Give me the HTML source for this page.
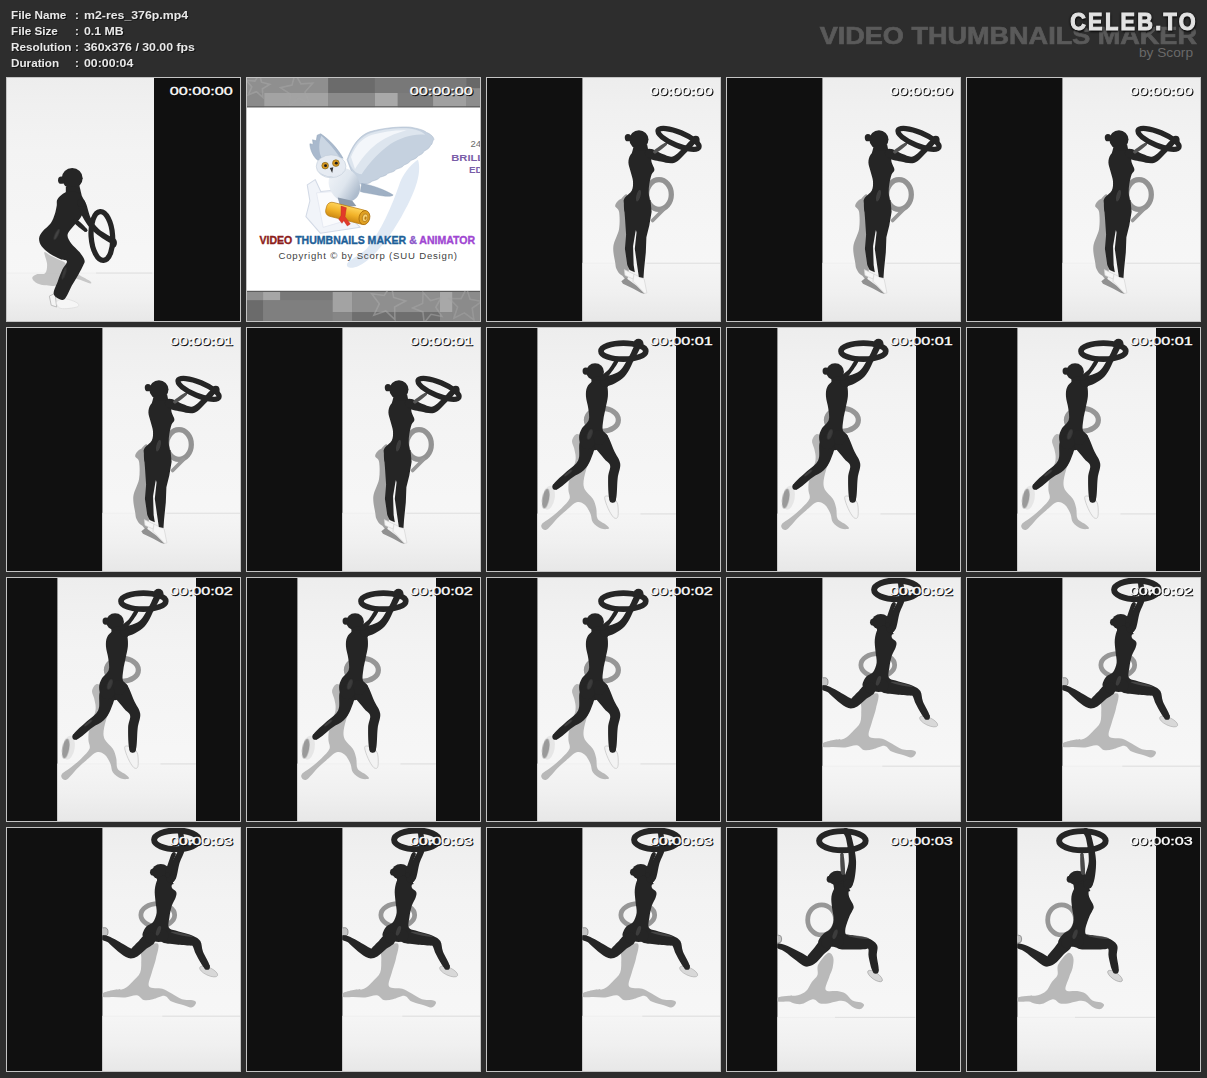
<!DOCTYPE html>
<html><head><meta charset="utf-8"><title>m2-res_376p.mp4</title>
<style>
html,body{margin:0;padding:0;}
body{width:1207px;height:1078px;overflow:hidden;background:#2d2d2d;font-family:"Liberation Sans",sans-serif;position:relative;}
.info{position:absolute;left:11px;top:7px;color:#e9e9e9;font-weight:bold;font-size:11px;line-height:16px;text-shadow:1px 1px 0 #151515;}
.info span{position:absolute;left:0;white-space:nowrap;transform-origin:0 50%;transform:scaleX(1.065);}
.info span.v{transform:scaleX(1.12);}
.vtm{position:absolute;right:10px;top:21px;font-weight:bold;font-size:24.6px;line-height:30px;color:#5a5a5a;white-space:nowrap;transform-origin:100% 50%;transform:scaleX(1.10);-webkit-text-stroke:0.7px #5a5a5a;}
.by{position:absolute;right:14px;top:44px;font-size:13.7px;line-height:18px;color:#696969;white-space:nowrap;}
.celeb{position:absolute;right:9.5px;top:8px;font-weight:bold;font-size:23px;line-height:28px;color:#e2e2e2;white-space:nowrap;letter-spacing:2.5px;transform-origin:100% 50%;transform:scaleX(0.94);-webkit-text-stroke:1.1px #e2e2e2;text-shadow:1px 2px 2px #0c0c0c,0 0 3px #0c0c0c,-1px 0 2px #111;}
.t{position:absolute;width:235px;height:245px;overflow:hidden;}
.t svg{position:absolute;left:0;top:0;display:block;}
</style></head><body>
<svg width="0" height="0" style="position:absolute"><defs>
<linearGradient id="bg" gradientUnits="userSpaceOnUse" x1="0" y1="0" x2="0" y2="245"><stop offset="0" stop-color="#ededed"/><stop offset="0.12" stop-color="#f0f0f0"/><stop offset="0.3" stop-color="#f3f3f3"/><stop offset="0.7" stop-color="#f6f6f6"/><stop offset="1" stop-color="#f7f7f7"/></linearGradient>
<linearGradient id="fl" x1="0" y1="0" x2="0" y2="1"><stop offset="0" stop-color="#f5f5f5"/><stop offset="0.5" stop-color="#f0f0f0"/><stop offset="1" stop-color="#e7e7e7"/></linearGradient>
<filter id="bl" x="-20%" y="-20%" width="140%" height="140%"><feGaussianBlur stdDeviation="0.5"/></filter>
<filter id="bl2" x="-20%" y="-20%" width="140%" height="140%"><feGaussianBlur stdDeviation="1.1"/></filter>
<clipPath id="clipA"><rect x="1.0" y="1" width="147.0" height="243"/></clipPath>
<g id="poseA" transform="scale(0.22822)"><rect x="0" y="859" width="1034" height="219" fill="url(#fl)"/><line x1="0" y1="859" x2="1034" y2="859" stroke="#ececec" stroke-width="3"/><line x1="395" y1="859" x2="640" y2="859" stroke="#d6d6d6" stroke-width="3"/><g filter="url(#bl2)" opacity="0.9"><path d="M168.0,768.0C170.7,761.8 184.5,777.2 196.0,783.0C207.5,788.8 226.0,797.2 237.0,803.0C248.0,808.8 259.8,810.8 262.0,818.0C264.2,825.2 253.7,835.7 250.0,846.0C246.3,856.3 244.0,869.0 240.0,880.0C236.0,891.0 237.7,906.5 226.0,912.0C214.3,917.5 186.0,915.0 170.0,913.0C154.0,911.0 139.2,905.5 130.0,900.0C120.8,894.5 114.2,886.0 115.0,880.0C115.8,874.0 125.7,867.3 135.0,864.0C144.3,860.7 163.5,867.3 171.0,860.0C178.5,852.7 180.5,835.3 180.0,820.0C179.5,804.7 165.3,774.2 168.0,768.0Z" fill="#bebebe" /><path d="M300.0,850.0C303.8,848.2 311.5,861.5 323.0,869.0C334.5,876.5 361.3,889.0 369.0,895.0C376.7,901.0 375.8,905.8 369.0,905.0C362.2,904.2 339.5,894.2 328.0,890.0C316.5,885.8 304.7,886.7 300.0,880.0C295.3,873.3 296.2,851.8 300.0,850.0Z" fill="#c4c4c4" /></g><g ><polygon points="190,960 215,948 222,1008 198,1000" fill="#f4f4f4" stroke="#b8b8b8" stroke-width="4"/><path d="M222.0,985.0C225.3,978.0 245.0,971.2 260.0,972.0C275.0,972.8 303.7,984.0 312.0,990.0C320.3,996.0 322.0,1004.0 310.0,1008.0C298.0,1012.0 254.7,1017.8 240.0,1014.0C225.3,1010.2 218.7,992.0 222.0,985.0Z" fill="#f6f6f6" stroke="#dadada" stroke-width="3"/></g><g ><ellipse cx="290" cy="444" rx="46" ry="45" fill="#252525" /><ellipse cx="242" cy="452" rx="14" ry="16" fill="#252525" /><polygon points="262,480 322,478 332,520 262,525" fill="#252525" /><path d="M227.0,533.0C234.5,522.7 251.8,507.2 267.0,503.0C282.2,498.8 305.7,502.2 318.0,508.0C330.3,513.8 336.7,527.0 341.0,538.0C345.3,549.0 346.2,561.2 344.0,574.0C341.8,586.8 335.3,602.7 328.0,615.0C320.7,627.3 309.7,635.5 300.0,648.0C290.3,660.5 272.5,676.7 270.0,690.0C267.5,703.3 276.2,715.0 285.0,728.0C293.8,741.0 313.2,755.5 323.0,768.0C332.8,780.5 341.5,793.3 344.0,803.0C346.5,812.7 342.3,815.8 338.0,826.0C333.7,836.2 326.3,849.2 318.0,864.0C309.7,878.8 297.3,898.0 288.0,915.0C278.7,932.0 269.7,955.8 262.0,966.0C254.3,976.2 250.8,978.5 242.0,976.0C233.2,973.5 211.5,964.5 209.0,951.0C206.5,937.5 220.7,912.8 227.0,895.0C233.3,877.2 240.3,858.5 247.0,844.0C253.7,829.5 268.7,815.7 267.0,808.0C265.3,800.3 249.7,803.8 237.0,798.0C224.3,792.2 204.5,782.3 191.0,773.0C177.5,763.7 163.7,753.0 156.0,742.0C148.3,731.0 144.2,718.0 145.0,707.0C145.8,696.0 152.5,687.0 161.0,676.0C169.5,665.0 187.2,653.7 196.0,641.0C204.8,628.3 209.7,612.7 214.0,600.0C218.3,587.3 219.8,576.2 222.0,565.0C224.2,553.8 219.5,543.3 227.0,533.0Z" fill="#252525" /><path d="M314.2,558.3C314.4,572.6 333.8,610.7 346.8,631.9C359.8,653.0 372.4,668.5 392.1,685.1C411.8,701.6 450.9,726.6 465.0,731.2C479.2,735.8 486.5,723.5 477.0,712.8C467.5,702.1 425.5,682.7 407.9,666.9C390.2,651.2 381.5,638.3 371.2,618.1C360.8,597.9 355.3,555.7 345.8,545.7C336.3,535.8 314.0,543.9 314.2,558.3Z" fill="#252525" /><circle cx="330" cy="552" r="17" fill="#252525"/><circle cx="471" cy="722" r="11" fill="#252525"/><path d="M297.0,636.7C302.8,645.6 334.5,671.8 344.0,676.6C353.5,681.4 359.8,674.3 354.0,665.4C348.2,656.5 318.5,628.1 309.0,623.3C299.5,618.5 291.2,627.8 297.0,636.7Z" fill="#252525" /><circle cx="303" cy="630" r="9" fill="#252525"/><circle cx="349" cy="671" r="7.5" fill="#252525"/><ellipse cx="420" cy="697" rx="47" ry="107" fill="none" stroke="#252525" stroke-width="23" transform="rotate(-4 420 697)" /><ellipse cx="471" cy="727" rx="15" ry="21" fill="#252525" /></g><g filter="url(#bl2)" opacity="0.65"><ellipse cx="222" cy="690" rx="7" ry="26" fill="#555" transform="rotate(25 222 690)" /><ellipse cx="255" cy="860" rx="6" ry="28" fill="#444" transform="rotate(18 255 860)" /></g></g>
<clipPath id="clipB"><rect x="96.4" y="1" width="137.6" height="243"/></clipPath>
<g id="poseB" transform="scale(0.22822)"><rect x="0" y="816" width="1034" height="262" fill="url(#fl)"/><line x1="0" y1="816" x2="1034" y2="816" stroke="#ececec" stroke-width="3"/><line x1="703" y1="816" x2="1030" y2="816" stroke="#d6d6d6" stroke-width="3"/><g filter="url(#bl2)" opacity="0.95"><ellipse cx="758" cy="515" rx="54" ry="65" fill="none" stroke="#8e8e8e" stroke-width="23" /><polyline points="778,580 730,629" fill="none" stroke="#949494" stroke-width="16" stroke-linecap="round" stroke-linejoin="round" /><path d="M566.0,564.0C567.2,554.8 580.2,539.0 590.0,535.0C599.8,531.0 619.2,485.8 625.0,540.0C630.8,594.2 630.2,805.2 625.0,860.0C619.8,914.8 602.7,871.7 594.0,869.0C585.3,866.3 577.7,853.3 573.0,844.0C568.3,834.7 568.5,830.0 566.0,813.0C563.5,796.0 555.2,766.5 558.0,742.0C560.8,717.5 578.8,691.3 583.0,666.0C587.2,640.7 585.8,607.0 583.0,590.0C580.2,573.0 564.8,573.2 566.0,564.0Z" fill="#9e9e9e" /><polygon points="593,895 612,880 660,915 697,951 680,947 644,927 600,906" fill="#8c8c8c" /></g><g ><polygon points="606,844 649,864 644,885 609,869" fill="#f6f6f6" stroke="#d4d4d4" stroke-width="3"/><polygon points="649,864 693,885 705,946 695,948 644,895" fill="#f6f6f6" stroke="#d4d4d4" stroke-width="3"/></g><g ><ellipse cx="670" cy="274" rx="42" ry="41" fill="#252525" /><ellipse cx="622" cy="266" rx="14" ry="16" fill="#252525" /><polygon points="648,300 706,296 716,345 636,345" fill="#252525" /><path d="M634.0,340.0C640.8,331.2 651.3,323.7 665.0,322.0C678.7,320.3 705.8,321.2 716.0,330.0C726.2,338.8 722.3,362.3 726.0,375.0C729.7,387.7 738.0,397.5 738.0,406.0C738.0,414.5 729.7,415.8 726.0,426.0C722.3,436.2 718.2,453.5 716.0,467.0C713.8,480.5 712.5,493.2 713.0,507.0C713.5,520.8 718.5,535.2 719.0,550.0C719.5,564.8 725.8,585.7 716.0,596.0C706.2,606.3 677.3,612.0 660.0,612.0C642.7,612.0 621.3,606.3 612.0,596.0C602.7,585.7 604.5,561.3 604.0,550.0C603.5,538.7 603.2,536.8 609.0,528.0C614.8,519.2 633.2,508.8 639.0,497.0C644.8,485.2 644.8,470.5 644.0,457.0C643.2,443.5 637.3,429.7 634.0,416.0C630.7,402.3 624.0,387.7 624.0,375.0C624.0,362.3 627.2,348.8 634.0,340.0Z" fill="#252525" /><polygon points="603.7,539 606,580 608.8,615 613.9,691.5 608.8,752.5 619,823.6 629,846 652,856 647,823.6 644.4,742 654.5,681 657,670 659.6,681 652,752.5 662,823.6 669.8,876 690,881 692.6,844 700.3,767.7 702.8,701.7 715.5,650.8 725.7,590 720.6,539" fill="#252525" /><path d="M709.1,352.8C716.2,362.0 746.1,366.6 765.7,370.4C785.2,374.3 807.7,382.4 826.4,375.8C845.2,369.2 863.1,345.3 878.2,330.8C893.3,316.2 913.2,298.1 917.0,288.6C920.8,279.0 910.2,269.3 901.0,273.4C891.8,277.5 875.7,300.8 861.8,313.2C847.9,325.7 832.2,344.1 817.6,348.2C803.0,352.2 790.1,343.1 774.3,337.6C758.6,332.1 733.8,312.7 722.9,315.2C712.1,317.8 701.9,343.6 709.1,352.8Z" fill="#252525" /><circle cx="716" cy="334" r="20" fill="#252525"/><circle cx="909" cy="281" r="11" fill="#252525"/><path d="M744.1,333.7C753.2,329.8 784.0,306.3 790.5,298.9C797.1,291.4 792.6,285.2 783.5,289.1C774.4,293.0 742.5,314.9 735.9,322.3C729.3,329.8 735.0,337.6 744.1,333.7Z" fill="#555" /><circle cx="740" cy="328" r="7" fill="#555"/><circle cx="787" cy="294" r="6" fill="#555"/><ellipse cx="843.6" cy="271" rx="97" ry="29" fill="none" stroke="#252525" stroke-width="23" transform="rotate(22.5 843.6 271)" /><ellipse cx="919" cy="276" rx="17" ry="19" fill="#252525" /></g><g filter="url(#bl2)" opacity="0.65"><ellipse cx="668" cy="520" rx="9" ry="26" fill="#4c4c4c" transform="rotate(15 668 520)" /></g></g>
<clipPath id="clipC"><rect x="51.4" y="1" width="138.6" height="243"/></clipPath>
<g id="poseC" transform="scale(0.22822)"><rect x="0" y="819" width="1034" height="259" fill="url(#fl)"/><line x1="0" y1="819" x2="1034" y2="819" stroke="#ececec" stroke-width="3"/><line x1="677" y1="819" x2="832" y2="819" stroke="#d6d6d6" stroke-width="3"/><g filter="url(#bl2)" opacity="0.92"><ellipse cx="510" cy="407" rx="70" ry="50" fill="none" stroke="#8f8f8f" stroke-width="23" /><path d="M377.0,499.0C378.3,488.2 387.8,473.2 395.0,470.0C402.2,466.8 412.5,471.7 420.0,480.0C427.5,488.3 433.7,504.2 440.0,520.0C446.3,535.8 457.5,559.8 458.0,575.0C458.5,590.2 448.0,594.8 443.0,611.0C438.0,627.2 429.7,655.2 428.0,672.0C426.3,688.8 426.3,698.5 433.0,712.0C439.7,725.5 459.7,739.3 468.0,753.0C476.3,766.7 479.5,779.5 483.0,794.0C486.5,808.5 482.2,828.2 489.0,840.0C495.8,851.8 515.7,857.8 524.0,865.0C532.3,872.2 542.3,880.0 539.0,883.0C535.7,886.0 515.8,887.7 504.0,883.0C492.2,878.3 475.7,865.7 468.0,855.0C460.3,844.3 463.8,831.7 458.0,819.0C452.2,806.3 443.2,787.5 433.0,779.0C422.8,770.5 410.7,763.8 397.0,768.0C383.3,772.2 365.3,792.0 351.0,804.0C336.7,816.0 324.5,826.5 311.0,840.0C297.5,853.5 280.2,877.3 270.0,885.0C259.8,892.7 254.3,889.3 250.0,886.0C245.7,882.7 238.2,873.7 244.0,865.0C249.8,856.3 270.5,845.8 285.0,834.0C299.5,822.2 317.5,807.5 331.0,794.0C344.5,780.5 361.0,766.7 366.0,753.0C371.0,739.3 361.0,727.2 361.0,712.0C361.0,696.8 360.8,683.2 366.0,662.0C371.2,640.8 388.5,606.2 392.0,585.0C395.5,563.8 389.5,549.3 387.0,535.0C384.5,520.7 375.7,509.8 377.0,499.0Z" fill="#b3b3b3" /></g><g ><ellipse cx="274" cy="748" rx="27" ry="53" fill="#e6e6e6" transform="rotate(10 274 748)" /><ellipse cx="262" cy="752" rx="15" ry="44" fill="#9a9a9a" transform="rotate(10 262 752)" filter="url(#bl2)"/><path d="M520.0,745.0C521.7,736.7 535.8,740.8 545.0,745.0C554.2,749.2 569.5,755.8 575.0,770.0C580.5,784.2 580.5,819.2 578.0,830.0C575.5,840.8 567.2,840.8 560.0,835.0C552.8,829.2 541.7,810.0 535.0,795.0C528.3,780.0 518.3,753.3 520.0,745.0Z" fill="#f3f3f3" stroke="#cdcdcd" stroke-width="4"/></g><g ><ellipse cx="478" cy="196" rx="39" ry="37" fill="#252525" /><ellipse cx="437" cy="193" rx="14" ry="16" fill="#252525" /><polygon points="462,222 515,212 535,262 462,275" fill="#252525" /><path d="M443.0,264.0C448.3,252.8 457.2,242.7 470.0,238.0C482.8,233.3 509.7,232.0 520.0,236.0C530.3,240.0 529.7,250.5 532.0,262.0C534.3,273.5 535.3,289.3 534.0,305.0C532.7,320.7 527.3,339.0 524.0,356.0C520.7,373.0 516.0,391.0 514.0,407.0C512.0,423.0 508.5,439.8 512.0,452.0C515.5,464.2 533.7,468.7 535.0,480.0C536.3,491.3 530.8,510.0 520.0,520.0C509.2,530.0 486.7,540.0 470.0,540.0C453.3,540.0 430.3,529.5 420.0,520.0C409.7,510.5 408.0,495.5 408.0,483.0C408.0,470.5 413.0,457.7 420.0,445.0C427.0,432.3 445.3,421.8 450.0,407.0C454.7,392.2 450.0,373.0 448.0,356.0C446.0,339.0 438.8,320.3 438.0,305.0C437.2,289.7 437.7,275.2 443.0,264.0Z" fill="#252525" /><path d="M465.6,500.8C464.4,518.7 502.0,556.8 515.0,574.5C528.1,592.1 540.5,592.4 543.8,606.7C547.1,621.0 535.5,635.6 535.1,660.5C534.6,685.4 535.3,739.9 541.0,755.9C546.7,771.8 563.0,771.5 569.0,756.1C575.0,740.8 573.7,689.6 576.9,663.5C580.1,637.4 590.5,619.0 588.2,599.3C585.9,579.6 573.9,567.5 563.0,545.5C552.0,523.5 538.6,474.6 522.4,467.2C506.2,459.7 466.8,482.9 465.6,500.8Z" fill="#252525" /><circle cx="494" cy="484" r="33" fill="#252525"/><circle cx="555" cy="756" r="14" fill="#252525"/><path d="M414.4,499.8C403.2,509.3 411.3,551.2 408.2,567.3C405.0,583.5 404.6,585.8 395.6,596.6C386.7,607.3 371.4,616.5 354.6,632.0C337.9,647.6 302.1,676.8 295.1,689.8C288.2,702.8 299.2,715.2 312.9,710.2C326.6,705.2 358.1,673.7 377.4,660.0C396.6,646.2 415.0,640.3 428.4,627.4C441.8,614.6 450.0,602.2 457.8,582.7C465.7,563.1 482.8,524.1 475.6,510.2C468.3,496.4 425.7,490.2 414.4,499.8Z" fill="#252525" /><circle cx="445" cy="505" r="31" fill="#252525"/><circle cx="304" cy="700" r="13.5" fill="#252525"/><path d="M528.7,260.0C544.5,259.1 585.7,238.4 606.1,218.2C626.6,197.9 639.6,160.5 651.3,138.4C663.1,116.2 676.1,96.0 676.7,85.4C677.4,74.7 663.3,67.9 655.3,74.6C647.3,81.3 640.6,105.8 628.7,125.6C616.8,145.5 603.4,177.4 583.9,193.8C564.3,210.2 520.5,212.9 511.3,224.0C502.1,235.0 512.9,261.0 528.7,260.0Z" fill="#252525" /><circle cx="520" cy="242" r="20" fill="#252525"/><circle cx="666" cy="80" r="12" fill="#252525"/><path d="M520.0,232.5C527.9,228.9 541.9,208.4 551.6,195.3C561.3,182.3 575.9,162.4 578.2,154.2C580.6,145.9 572.4,140.7 565.8,145.8C559.1,150.9 548.7,172.7 538.4,184.7C528.1,196.6 507.1,209.5 504.0,217.5C500.9,225.4 512.1,236.2 520.0,232.5Z" fill="#252525" /><circle cx="512" cy="225" r="11" fill="#252525"/><circle cx="572" cy="150" r="7.5" fill="#252525"/><ellipse cx="602" cy="106" rx="98" ry="35" fill="none" stroke="#252525" stroke-width="25" /><ellipse cx="668" cy="72" rx="22" ry="20" fill="#252525" /></g><g filter="url(#bl2)" opacity="0.65"><ellipse cx="455" cy="470" rx="10" ry="24" fill="#4a4a4a" transform="rotate(20 455 470)" /><ellipse cx="360" cy="640" rx="22" ry="5" fill="#505050" transform="rotate(-38 360 640)" /></g></g>
<clipPath id="clipD"><rect x="96.4" y="1" width="137.6" height="243"/></clipPath>
<g id="poseD" transform="scale(0.22822)"><rect x="0" y="829" width="1034" height="249" fill="url(#fl)"/><line x1="0" y1="829" x2="1034" y2="829" stroke="#ececec" stroke-width="3"/><line x1="685" y1="829" x2="1030" y2="829" stroke="#d6d6d6" stroke-width="3"/><g filter="url(#bl2)" opacity="0.95"><ellipse cx="665" cy="386" rx="74" ry="50" fill="none" stroke="#929292" stroke-width="21" /><path d="M596.0,531.0C608.0,520.0 654.8,503.3 665.0,511.0C675.2,518.7 661.3,555.8 657.0,577.0C652.7,598.2 644.0,617.7 639.0,638.0C634.0,658.3 619.3,687.2 627.0,699.0C634.7,710.8 668.5,703.8 685.0,709.0C701.5,714.2 711.7,722.3 726.0,730.0C740.3,737.7 755.0,750.0 771.0,755.0C787.0,760.0 811.8,757.0 822.0,760.0C832.2,763.0 833.7,767.8 832.0,773.0C830.3,778.2 821.3,789.8 812.0,791.0C802.7,792.2 790.3,784.3 776.0,780.0C761.7,775.7 739.5,771.7 726.0,765.0C712.5,758.3 708.7,741.7 695.0,740.0C681.3,738.3 659.2,752.0 644.0,755.0C628.8,758.0 615.8,761.0 604.0,758.0C592.2,755.0 586.7,738.8 573.0,737.0C559.3,735.2 539.0,745.7 522.0,747.0C505.0,748.3 487.0,745.3 471.0,745.0C455.0,744.7 433.5,748.0 426.0,745.0C418.5,742.0 418.5,732.2 426.0,727.0C433.5,721.8 455.8,717.0 471.0,714.0C486.2,711.0 503.3,714.8 517.0,709.0C530.7,703.2 541.2,690.8 553.0,679.0C564.8,667.2 581.3,655.0 588.0,638.0C594.7,621.0 591.7,594.8 593.0,577.0C594.3,559.2 584.0,542.0 596.0,531.0Z" fill="#b6b6b6" /></g><g ><ellipse cx="888" cy="633" rx="43" ry="17" fill="#d8d8d8" transform="rotate(25 888 633)" stroke="#b4b4b4" stroke-width="3"/><ellipse cx="431" cy="460" rx="16" ry="19" fill="#c4c4c4" stroke="#8f8f8f" stroke-width="4"/></g><g ><ellipse cx="678" cy="196" rx="39" ry="34" fill="#252525" /><ellipse cx="645" cy="198" rx="14" ry="15" fill="#252525" /><polygon points="660,220 712,205 735,250 668,268" fill="#252525" /><path d="M665.0,229.0C672.2,218.7 684.0,212.0 695.0,212.0C706.0,212.0 725.8,220.3 731.0,229.0C736.2,237.7 723.5,254.7 726.0,264.0C728.5,273.3 743.2,277.3 746.0,285.0C748.8,292.7 746.3,299.8 743.0,310.0C739.7,320.2 730.5,331.7 726.0,346.0C721.5,360.3 718.3,380.8 716.0,396.0C713.7,411.2 709.7,426.0 712.0,437.0C714.3,448.0 733.7,451.5 730.0,462.0C726.3,472.5 705.0,493.7 690.0,500.0C675.0,506.3 655.2,503.7 640.0,500.0C624.8,496.3 603.3,488.5 599.0,478.0C594.7,467.5 606.5,447.2 614.0,437.0C621.5,426.8 636.3,427.2 644.0,417.0C651.7,406.8 658.2,391.3 660.0,376.0C661.8,360.7 656.3,342.0 655.0,325.0C653.7,308.0 650.3,290.0 652.0,274.0C653.7,258.0 657.8,239.3 665.0,229.0Z" fill="#252525" /><path d="M680.6,501.6C690.0,512.7 725.0,511.5 745.8,514.5C766.7,517.5 793.5,518.3 805.6,519.6C817.7,520.8 813.8,515.6 818.4,522.1C822.9,528.6 824.4,542.6 833.0,558.8C841.6,574.9 860.2,610.9 870.0,618.9C879.8,627.0 893.2,619.3 892.0,607.1C890.8,594.8 869.8,563.1 863.0,545.2C856.3,527.4 859.1,511.4 851.6,499.9C844.2,488.4 834.3,483.5 818.4,476.4C802.5,469.4 777.7,462.1 756.2,457.5C734.7,452.8 702.0,441.0 689.4,448.4C676.8,455.7 671.2,490.6 680.6,501.6Z" fill="#252525" /><circle cx="685" cy="475" r="27" fill="#252525"/><circle cx="881" cy="613" r="12.5" fill="#252525"/><path d="M617.7,467.0C606.5,465.9 594.3,487.4 583.1,498.0C571.9,508.7 556.2,524.9 550.6,530.8C545.1,536.7 556.0,536.6 549.7,533.6C543.4,530.5 528.4,521.0 513.1,512.3C497.7,503.7 471.8,488.0 457.5,481.7C443.2,475.4 433.3,472.6 427.2,474.5C421.1,476.5 417.9,488.5 420.8,493.5C423.7,498.4 432.8,495.6 444.5,504.3C456.2,513.0 475.6,534.0 490.9,545.7C506.2,557.4 522.2,570.8 536.3,574.4C550.4,578.0 562.2,574.0 575.4,567.2C588.5,560.5 602.4,544.3 614.9,534.0C627.4,523.6 649.8,516.1 650.3,505.0C650.7,493.8 628.9,468.2 617.7,467.0Z" fill="#252525" /><circle cx="634" cy="486" r="25" fill="#252525"/><circle cx="424" cy="484" r="10" fill="#252525"/><path d="M741.0,231.2C750.6,221.0 753.4,180.3 760.5,157.4C767.7,134.4 781.6,117.1 783.9,93.7C786.1,70.3 778.9,29.5 774.0,17.1C769.0,4.6 756.7,6.7 754.0,18.9C751.4,31.1 761.9,69.0 758.1,90.3C754.4,111.6 740.6,125.2 731.5,146.6C722.3,168.1 701.4,204.7 703.0,218.8C704.6,232.9 731.4,241.5 741.0,231.2Z" fill="#252525" /><circle cx="722" cy="225" r="20" fill="#252525"/><circle cx="764" cy="18" r="10" fill="#252525"/><path d="M718.6,212.8C724.8,202.4 730.5,160.1 734.6,144.6C738.8,129.1 744.4,125.1 743.4,120.0C742.4,114.9 732.9,110.8 728.6,114.0C724.2,117.3 722.6,123.9 717.4,139.4C712.2,154.9 697.2,195.0 697.4,207.2C697.6,219.4 712.4,223.2 718.6,212.8Z" fill="#252525" /><circle cx="708" cy="210" r="11" fill="#252525"/><circle cx="736" cy="117" r="8" fill="#252525"/><ellipse cx="747" cy="56" rx="98" ry="41" fill="none" stroke="#252525" stroke-width="26" /></g><g filter="url(#bl2)" opacity="0.65"><ellipse cx="770" cy="470" rx="50" ry="5" fill="#555" transform="rotate(12 770 470)" /><ellipse cx="668" cy="455" rx="9" ry="22" fill="#484848" transform="rotate(20 668 455)" /></g></g>
<clipPath id="clipE"><rect x="51.4" y="1" width="138.6" height="243"/></clipPath>
<g id="poseE" transform="scale(0.22822)"><rect x="0" y="834" width="1034" height="244" fill="url(#fl)"/><line x1="0" y1="834" x2="1034" y2="834" stroke="#ececec" stroke-width="3"/><line x1="478" y1="834" x2="828" y2="834" stroke="#d6d6d6" stroke-width="3"/><g filter="url(#bl2)" opacity="0.95"><ellipse cx="419" cy="407" rx="61" ry="66" fill="none" stroke="#929292" stroke-width="21" /><path d="M404.0,603.0C411.7,587.0 436.0,557.2 447.0,552.0C458.0,546.8 466.7,561.0 470.0,572.0C473.3,583.0 470.0,603.7 467.0,618.0C464.0,632.3 457.0,642.0 452.0,658.0C447.0,674.0 431.0,703.8 437.0,714.0C443.0,724.2 473.7,716.3 488.0,719.0C502.3,721.7 512.0,723.2 523.0,730.0C534.0,736.8 543.0,753.7 554.0,760.0C565.0,766.3 580.5,764.7 589.0,768.0C597.5,771.3 605.0,775.0 605.0,780.0C605.0,785.0 596.7,796.2 589.0,798.0C581.3,799.8 570.0,796.5 559.0,791.0C548.0,785.5 534.8,769.7 523.0,765.0C511.2,760.3 500.7,761.7 488.0,763.0C475.3,764.3 459.7,771.3 447.0,773.0C434.3,774.7 423.0,776.0 412.0,773.0C401.0,770.0 393.8,754.7 381.0,755.0C368.2,755.3 348.5,772.0 335.0,775.0C321.5,778.0 310.2,774.7 300.0,773.0C289.8,771.3 286.0,766.3 274.0,765.0C262.0,763.7 235.7,768.0 228.0,765.0C220.3,762.0 222.0,751.2 228.0,747.0C234.0,742.8 249.5,741.7 264.0,740.0C278.5,738.3 300.5,740.5 315.0,737.0C329.5,733.5 340.8,728.7 351.0,719.0C361.2,709.3 367.7,690.8 376.0,679.0C384.3,667.2 396.3,660.7 401.0,648.0C405.7,635.3 396.3,619.0 404.0,603.0Z" fill="#b6b6b6" /></g><g ><ellipse cx="653" cy="653" rx="38" ry="15" fill="#d6d6d6" transform="rotate(35 653 653)" stroke="#a8a8a8" stroke-width="3"/><ellipse cx="231" cy="491" rx="13" ry="17" fill="#c8c8c8" stroke="#8f8f8f" stroke-width="4"/></g><g ><ellipse cx="488" cy="224" rx="40" ry="32" fill="#252525" /><ellipse cx="455" cy="229" rx="14" ry="15" fill="#252525" /><polygon points="470,248 522,232 545,280 478,300" fill="#252525" /><path d="M478.0,264.0C485.2,254.0 495.7,245.0 505.0,245.0C514.3,245.0 528.3,254.0 534.0,264.0C539.7,274.0 534.8,291.3 539.0,305.0C543.2,318.7 556.5,335.8 559.0,346.0C561.5,356.2 557.3,357.7 554.0,366.0C550.7,374.3 544.2,382.5 539.0,396.0C533.8,409.5 524.8,434.2 523.0,447.0C521.2,459.8 521.8,467.8 528.0,473.0C534.2,478.2 558.0,470.2 560.0,478.0C562.0,485.8 555.0,512.2 540.0,520.0C525.0,527.8 492.3,527.0 470.0,525.0C447.7,523.0 413.2,517.5 406.0,508.0C398.8,498.5 418.5,478.2 427.0,468.0C435.5,457.8 449.5,457.2 457.0,447.0C464.5,436.8 470.7,422.2 472.0,407.0C473.3,391.8 466.7,373.0 465.0,356.0C463.3,339.0 459.8,320.3 462.0,305.0C464.2,289.7 470.8,274.0 478.0,264.0Z" fill="#252525" /><path d="M485.9,528.9C496.1,539.6 531.0,535.8 551.6,536.9C572.2,538.0 597.4,535.6 609.5,535.4C621.6,535.1 621.6,529.8 624.2,535.4C626.8,541.0 622.0,553.0 625.1,569.2C628.3,585.4 636.0,622.9 643.3,632.6C650.5,642.3 665.8,638.7 668.7,627.4C671.7,616.1 662.0,583.2 660.9,564.8C659.7,546.3 668.5,529.6 661.8,516.6C655.1,503.6 638.0,493.5 620.5,486.6C602.9,479.7 578.2,477.4 556.4,475.1C534.7,472.8 501.9,464.1 490.1,473.1C478.4,482.1 475.6,518.3 485.9,528.9Z" fill="#252525" /><circle cx="488" cy="501" r="28" fill="#252525"/><circle cx="656" cy="630" r="13" fill="#252525"/><path d="M423.6,489.1C411.9,489.5 401.4,512.6 390.5,525.2C379.6,537.8 363.3,557.3 358.0,564.5C352.7,571.8 363.8,571.2 358.7,568.7C353.6,566.3 342.4,557.9 327.7,550.1C312.9,542.2 286.7,528.2 270.5,521.6C254.3,515.0 238.4,509.4 230.5,510.6C222.7,511.9 219.0,523.4 223.5,529.4C228.0,535.3 243.7,537.3 257.5,546.4C271.3,555.5 291.4,573.1 306.3,583.9C321.3,594.7 333.7,608.7 347.3,611.3C360.9,613.8 374.6,608.2 388.0,599.5C401.3,590.7 415.4,571.6 427.5,558.8C439.6,546.0 461.1,534.5 460.4,522.9C459.8,511.3 435.2,488.7 423.6,489.1Z" fill="#252525" /><circle cx="442" cy="506" r="25" fill="#252525"/><circle cx="227" cy="520" r="10" fill="#252525"/><path d="M554.6,254.2C564.0,238.6 570.5,186.7 570.0,152.4C569.5,118.1 557.5,71.7 551.7,48.2C545.9,24.7 541.5,15.9 535.0,11.3C528.6,6.7 514.4,13.6 513.0,20.7C511.5,27.8 522.1,32.0 526.3,53.8C530.5,75.6 540.2,119.6 538.0,151.6C535.9,183.6 510.7,228.7 513.4,245.8C516.2,262.9 545.1,269.8 554.6,254.2Z" fill="#252525" /><circle cx="534" cy="250" r="21" fill="#252525"/><circle cx="524" cy="16" r="12" fill="#252525"/><path d="M521.5,199.5C523.2,186.3 518.4,134.4 515.0,121.6C511.6,108.7 502.8,109.3 501.0,122.4C499.3,135.6 501.1,187.7 504.5,200.5C507.9,213.4 519.7,212.6 521.5,199.5Z" fill="#4a4a4a" /><circle cx="513" cy="200" r="8.5" fill="#4a4a4a"/><circle cx="508" cy="122" r="7" fill="#4a4a4a"/><ellipse cx="510" cy="60" rx="102" ry="42" fill="none" stroke="#252525" stroke-width="26" /></g><g filter="url(#bl2)" opacity="0.65"><ellipse cx="580" cy="482" rx="48" ry="5" fill="#555" transform="rotate(8 580 482)" /><ellipse cx="478" cy="470" rx="9" ry="22" fill="#484848" transform="rotate(20 478 470)" /></g></g>
<linearGradient id="gold" x1="0" y1="0" x2="0" y2="1"><stop offset="0" stop-color="#ffd45a"/><stop offset="0.5" stop-color="#f2b32a"/><stop offset="1" stop-color="#cf8a12"/></linearGradient><linearGradient id="wing" x1="0" y1="0" x2="0.3" y2="1"><stop offset="0" stop-color="#f4f7fb"/><stop offset="0.55" stop-color="#dbe4ee"/><stop offset="1" stop-color="#b7c4d4"/></linearGradient><linearGradient id="obody" x1="0" y1="0" x2="0.4" y2="1"><stop offset="0" stop-color="#f2f5f9"/><stop offset="0.6" stop-color="#dfe6ee"/><stop offset="1" stop-color="#aebccd"/></linearGradient>
</defs></svg>

<div class="info"><span style="top:0">File Name</span><span style="top:0;left:64px">:</span><span style="top:0;left:73px" class="v">m2-res_376p.mp4</span>
<span style="top:16px">File Size</span><span style="top:16px;left:64px">:</span><span style="top:16px;left:73px" class="v">0.1 MB</span>
<span style="top:32px">Resolution</span><span style="top:32px;left:64px">:</span><span style="top:32px;left:73px" class="v">360x376 / 30.00 fps</span>
<span style="top:48px">Duration</span><span style="top:48px;left:64px">:</span><span style="top:48px;left:73px" class="v">00:00:04</span></div>
<div class="vtm">VIDEO THUMBNAILS MAKER</div>
<div class="by">by Scorp</div>
<div class="celeb">CELEB.TO</div>
<div class="t" style="left:6px;top:77px"><svg width="235" height="245" viewBox="0 0 235 245"><rect x="0" y="0" width="235" height="245" fill="#101010"/><rect x="1.0" y="0" width="147.0" height="245" fill="url(#bg)"/><g clip-path="url(#clipA)"><use href="#poseA"/></g><g transform="translate(226.7,18.1) scale(1.385,1)"><text x="0.72" y="1" text-anchor="end" font-family="Liberation Sans, sans-serif" font-size="11.7" fill="#080808" stroke="#080808" stroke-width="0.45">00:00:00</text><text x="0" y="0" text-anchor="end" font-family="Liberation Sans, sans-serif" font-size="11.7" fill="#fdfdfd" stroke="#fdfdfd" stroke-width="0.32">00:00:00</text></g><rect x="0.5" y="0.5" width="234" height="244" fill="none" stroke="#c4c4c4" stroke-width="1"/></svg></div>
<div class="t" style="left:246px;top:77px"><svg width="235" height="245" viewBox="0 0 235 245"><rect width="235" height="245" fill="#ffffff"/><g transform="scale(0.22822)"><rect x="0" y="0" width="1034" height="134" fill="#868686"/><rect x="0" y="0" width="360" height="70" fill="#8f8f8f"/><rect x="0" y="70" width="80" height="64" fill="#8a8a8a"/><rect x="80" y="70" width="280" height="64" fill="#a3a3a3"/><rect x="360" y="0" width="205" height="70" fill="#6b6b6b"/><rect x="360" y="70" width="205" height="64" fill="#8b8b8b"/><rect x="565" y="70" width="100" height="64" fill="#a9a9a9"/><rect x="565" y="0" width="400" height="70" fill="#787878"/><rect x="665" y="70" width="155" height="64" fill="#7d7d7d"/><rect x="820" y="70" width="145" height="64" fill="#a0a0a0"/><rect x="965" y="0" width="69" height="50" fill="#686868"/><rect x="965" y="50" width="69" height="84" fill="#8d8d8d"/><polygon points="59.6,-14.2 67.8,22.8 104.5,32.3 71.9,51.6 74.1,89.4 45.7,64.4 10.4,78.2 25.5,43.4 1.4,14.2 39.2,17.8" fill="none" stroke="#a8a8a8" stroke-width="7" opacity="0.55"/><polygon points="214.6,-14.3 240.8,30.2 292.4,27.1 258.2,65.9 277.1,114.0 229.7,93.4 189.8,126.2 194.7,74.8 151.1,47.0 201.6,35.7" fill="none" stroke="#a6a6a6" stroke-width="7" opacity="0.55"/><rect x="0" y="128" width="1034" height="6" fill="#5c5c5c"/><rect x="0" y="936" width="1034" height="142" fill="#838383"/><rect x="0" y="936" width="1034" height="6" fill="#5c5c5c"/><rect x="0" y="942" width="75" height="36" fill="#8e8e8e"/><rect x="75" y="942" width="75" height="36" fill="#a6a6a6"/><rect x="0" y="978" width="75" height="100" fill="#6b6b6b"/><rect x="75" y="978" width="305" height="100" fill="#7f7f7f"/><rect x="150" y="942" width="230" height="36" fill="#797979"/><rect x="380" y="942" width="85" height="88" fill="#a3a3a3"/><rect x="380" y="1030" width="85" height="48" fill="#858585"/><rect x="465" y="942" width="385" height="88" fill="#8f8f8f"/><rect x="465" y="1030" width="385" height="48" fill="#6f6f6f"/><rect x="850" y="942" width="55" height="88" fill="#a8a8a8"/><rect x="850" y="1030" width="55" height="48" fill="#8a8a8a"/><rect x="905" y="942" width="129" height="136" fill="#8b8b8b"/><polygon points="636.6,911.7 646.8,965.9 699.6,981.6 651.2,1008.0 652.5,1063.1 612.5,1025.2 560.5,1043.5 584.2,993.8 550.7,950.0 605.4,957.1" fill="none" stroke="#a9a9a9" stroke-width="7" opacity="0.55"/><polygon points="776.1,944.2 808.7,979.7 855.2,966.9 831.5,1008.9 858.0,1049.1 810.8,1039.6 780.7,1077.3 775.2,1029.4 730.0,1012.4 773.9,992.4" fill="none" stroke="#a5a5a5" stroke-width="7" opacity="0.55"/><polygon points="966.5,925.3 982.1,974.5 1033.1,983.1 991.1,1013.2 998.6,1064.3 957.1,1033.6 910.8,1056.6 927.1,1007.6 891.0,970.7 942.6,971.1" fill="none" stroke="#a2a2a2" stroke-width="7" opacity="0.55"/><rect x="0" y="134" width="1034" height="802" fill="#ffffff"/><g transform="translate(192.8,100.8) scale(0.5811)"><path d="M965,450 C1000,560 930,720 840,880 C760,1020 640,1190 520,1250 C470,1275 420,1270 430,1235 C450,1200 520,1180 580,1120 C680,1000 770,800 830,620 C860,540 930,470 965,450 Z" fill="#e0e9f4"/><path d="M130,640 L190,600 L232,690 L330,680 L470,900 L530,960 L230,1005 L120,880 L150,760 Z" fill="#f1f4f9" stroke="#d3dae6" stroke-width="8" stroke-linejoin="round"/><path d="M200,700 L330,690 L455,900 L250,960 Z" fill="#fafbfd" stroke="#dfe4ee" stroke-width="5" stroke-linejoin="round"/><path d="M210,455 C175,430 150,370 150,330 L175,335 L170,300 L198,308 L205,265 L232,255 C300,300 370,380 400,440 C340,420 260,430 210,455 Z" fill="#a9b9cd" stroke="#93a5bb" stroke-width="4" stroke-linejoin="round"/><path d="M236,270 C290,320 350,390 380,440 C330,425 270,430 240,440 C215,400 215,320 236,270 Z" fill="#cbd6e3"/><path d="M430,450 C470,340 520,270 600,240 C720,205 850,200 910,205 C960,215 1010,225 1030,245 C1060,255 1085,280 1085,298 C1070,310 1080,330 1058,345 C1050,365 1035,372 1010,386 C1005,405 985,412 968,420 C955,440 935,447 910,456 C900,475 880,482 860,490 C850,508 825,514 800,522 C790,540 765,545 740,552 C730,568 705,574 680,582 C668,598 645,604 620,612 L600,625 C560,640 520,640 490,610 Z" fill="#c5d1df" stroke="#a9b9cb" stroke-width="4" stroke-linejoin="round"/><path d="M440,450 C480,340 530,275 610,248 C720,215 840,210 900,215 C960,225 1000,240 1020,262 C940,250 840,280 760,330 C680,385 600,470 540,560 C500,560 460,520 440,450 Z" fill="#dde5ee"/><path d="M460,430 C500,330 550,285 620,262 C700,238 800,225 880,228 C790,250 700,290 630,350 C570,400 520,470 490,520 Z" fill="#f3f6fa"/><path d="M540,630 C620,640 720,680 778,716 C765,735 700,725 640,712 C600,705 560,700 530,690 Z" fill="#9fb0c4" stroke="#8a9db4" stroke-width="3"/><ellipse cx="410" cy="640" rx="112" ry="135" fill="url(#obody)" transform="rotate(-32 410 640)"/><path d="M360,735 L470,760 L500,800 L380,810 Z" fill="#8c9aab"/><ellipse cx="310" cy="500" rx="112" ry="86" fill="#e6ebf2" stroke="#bcc8d6" stroke-width="4"/><path d="M205,520 C240,590 380,600 418,515 C400,560 340,580 300,578 C260,576 225,560 205,520 Z" fill="#b9c6d6"/><circle cx="265" cy="495" r="25" fill="#dc9a1e" stroke="#7d6428" stroke-width="5"/><circle cx="268" cy="495" r="11" fill="#1c1c1c"/><circle cx="346" cy="476" r="25" fill="#dc9a1e" stroke="#7d6428" stroke-width="5"/><circle cx="349" cy="476" r="11" fill="#1c1c1c"/><path d="M300,512 L326,508 L318,550 Z" fill="#333"/><g transform="rotate(14 430 855)"><rect x="268" y="800" width="320" height="108" rx="40" fill="url(#gold)" stroke="#b67a10" stroke-width="5"/><ellipse cx="565" cy="854" rx="40" ry="54" fill="#dfa022" stroke="#a66b0c" stroke-width="6"/><ellipse cx="570" cy="854" rx="21" ry="30" fill="#f7d273" stroke="#a66b0c" stroke-width="5"/><ellipse cx="574" cy="856" rx="8" ry="12" fill="#b87a10"/></g><path d="M385,800 L425,812 L415,880 L455,935 L432,950 L405,910 L392,930 L368,900 L385,870 Z" fill="#e23a2a" stroke="#b82a1c" stroke-width="3"/></g></g><g transform="translate(13.5,166.6) scale(1.0,1)"><text font-family="Liberation Sans, sans-serif" font-weight="bold" font-size="10.4" textLength="215.5" lengthAdjust="spacingAndGlyphs" stroke-width="0.35"><tspan fill="#8c1b1b" stroke="#8c1b1b">VIDEO</tspan><tspan fill="#1d5f98" stroke="#1d5f98"> THUMBNAILS MAKER</tspan><tspan fill="#8a57c9" stroke="#8a57c9"> &amp;</tspan><tspan fill="#a046d2" stroke="#a046d2"> ANIMATOR</tspan></text></g><text x="32.5" y="182.2" font-family="Liberation Sans, sans-serif" font-size="9.6" fill="#3f3f3f" textLength="178.5" lengthAdjust="spacing">Copyright © by Scorp (SUU Design)</text><text x="224.5" y="70" font-family="Liberation Sans, sans-serif" font-size="9.5" fill="#6a6a6a">24</text><text x="205.3" y="84.3" font-family="Liberation Sans, sans-serif" font-size="9.8" font-weight="bold" fill="#7a5ea8" textLength="36" lengthAdjust="spacingAndGlyphs">BRILLI</text><text x="223" y="96.2" font-family="Liberation Sans, sans-serif" font-size="9.8" font-weight="bold" fill="#7a5ea8">ED</text><g transform="translate(226.7,18.1) scale(1.385,1)"><text x="0.72" y="1" text-anchor="end" font-family="Liberation Sans, sans-serif" font-size="11.7" fill="#080808" stroke="#080808" stroke-width="0.45">00:00:00</text><text x="0" y="0" text-anchor="end" font-family="Liberation Sans, sans-serif" font-size="11.7" fill="#fdfdfd" stroke="#fdfdfd" stroke-width="0.32">00:00:00</text></g><rect x="0.5" y="0.5" width="234" height="244" fill="none" stroke="#c4c4c4" stroke-width="1"/></svg></div>
<div class="t" style="left:486px;top:77px"><svg width="235" height="245" viewBox="0 0 235 245"><rect x="0" y="0" width="235" height="245" fill="#101010"/><rect x="96.4" y="0" width="137.6" height="245" fill="url(#bg)"/><g clip-path="url(#clipB)"><use href="#poseB"/></g><g transform="translate(226.7,18.1) scale(1.385,1)"><text x="0.72" y="1" text-anchor="end" font-family="Liberation Sans, sans-serif" font-size="11.7" fill="#080808" stroke="#080808" stroke-width="0.45">00:00:00</text><text x="0" y="0" text-anchor="end" font-family="Liberation Sans, sans-serif" font-size="11.7" fill="#fdfdfd" stroke="#fdfdfd" stroke-width="0.32">00:00:00</text></g><rect x="0.5" y="0.5" width="234" height="244" fill="none" stroke="#c4c4c4" stroke-width="1"/></svg></div>
<div class="t" style="left:726px;top:77px"><svg width="235" height="245" viewBox="0 0 235 245"><rect x="0" y="0" width="235" height="245" fill="#101010"/><rect x="96.4" y="0" width="137.6" height="245" fill="url(#bg)"/><g clip-path="url(#clipB)"><use href="#poseB"/></g><g transform="translate(226.7,18.1) scale(1.385,1)"><text x="0.72" y="1" text-anchor="end" font-family="Liberation Sans, sans-serif" font-size="11.7" fill="#080808" stroke="#080808" stroke-width="0.45">00:00:00</text><text x="0" y="0" text-anchor="end" font-family="Liberation Sans, sans-serif" font-size="11.7" fill="#fdfdfd" stroke="#fdfdfd" stroke-width="0.32">00:00:00</text></g><rect x="0.5" y="0.5" width="234" height="244" fill="none" stroke="#c4c4c4" stroke-width="1"/></svg></div>
<div class="t" style="left:966px;top:77px"><svg width="235" height="245" viewBox="0 0 235 245"><rect x="0" y="0" width="235" height="245" fill="#101010"/><rect x="96.4" y="0" width="137.6" height="245" fill="url(#bg)"/><g clip-path="url(#clipB)"><use href="#poseB"/></g><g transform="translate(226.7,18.1) scale(1.385,1)"><text x="0.72" y="1" text-anchor="end" font-family="Liberation Sans, sans-serif" font-size="11.7" fill="#080808" stroke="#080808" stroke-width="0.45">00:00:00</text><text x="0" y="0" text-anchor="end" font-family="Liberation Sans, sans-serif" font-size="11.7" fill="#fdfdfd" stroke="#fdfdfd" stroke-width="0.32">00:00:00</text></g><rect x="0.5" y="0.5" width="234" height="244" fill="none" stroke="#c4c4c4" stroke-width="1"/></svg></div>
<div class="t" style="left:6px;top:327px"><svg width="235" height="245" viewBox="0 0 235 245"><rect x="0" y="0" width="235" height="245" fill="#101010"/><rect x="96.4" y="0" width="137.6" height="245" fill="url(#bg)"/><g clip-path="url(#clipB)"><use href="#poseB"/></g><g transform="translate(226.7,18.1) scale(1.385,1)"><text x="0.72" y="1" text-anchor="end" font-family="Liberation Sans, sans-serif" font-size="11.7" fill="#080808" stroke="#080808" stroke-width="0.45">00:00:01</text><text x="0" y="0" text-anchor="end" font-family="Liberation Sans, sans-serif" font-size="11.7" fill="#fdfdfd" stroke="#fdfdfd" stroke-width="0.32">00:00:01</text></g><rect x="0.5" y="0.5" width="234" height="244" fill="none" stroke="#c4c4c4" stroke-width="1"/></svg></div>
<div class="t" style="left:246px;top:327px"><svg width="235" height="245" viewBox="0 0 235 245"><rect x="0" y="0" width="235" height="245" fill="#101010"/><rect x="96.4" y="0" width="137.6" height="245" fill="url(#bg)"/><g clip-path="url(#clipB)"><use href="#poseB"/></g><g transform="translate(226.7,18.1) scale(1.385,1)"><text x="0.72" y="1" text-anchor="end" font-family="Liberation Sans, sans-serif" font-size="11.7" fill="#080808" stroke="#080808" stroke-width="0.45">00:00:01</text><text x="0" y="0" text-anchor="end" font-family="Liberation Sans, sans-serif" font-size="11.7" fill="#fdfdfd" stroke="#fdfdfd" stroke-width="0.32">00:00:01</text></g><rect x="0.5" y="0.5" width="234" height="244" fill="none" stroke="#c4c4c4" stroke-width="1"/></svg></div>
<div class="t" style="left:486px;top:327px"><svg width="235" height="245" viewBox="0 0 235 245"><rect x="0" y="0" width="235" height="245" fill="#101010"/><rect x="51.4" y="0" width="138.6" height="245" fill="url(#bg)"/><g clip-path="url(#clipC)"><use href="#poseC"/></g><g transform="translate(226.7,18.1) scale(1.385,1)"><text x="0.72" y="1" text-anchor="end" font-family="Liberation Sans, sans-serif" font-size="11.7" fill="#080808" stroke="#080808" stroke-width="0.45">00:00:01</text><text x="0" y="0" text-anchor="end" font-family="Liberation Sans, sans-serif" font-size="11.7" fill="#fdfdfd" stroke="#fdfdfd" stroke-width="0.32">00:00:01</text></g><rect x="0.5" y="0.5" width="234" height="244" fill="none" stroke="#c4c4c4" stroke-width="1"/></svg></div>
<div class="t" style="left:726px;top:327px"><svg width="235" height="245" viewBox="0 0 235 245"><rect x="0" y="0" width="235" height="245" fill="#101010"/><rect x="51.4" y="0" width="138.6" height="245" fill="url(#bg)"/><g clip-path="url(#clipC)"><use href="#poseC"/></g><g transform="translate(226.7,18.1) scale(1.385,1)"><text x="0.72" y="1" text-anchor="end" font-family="Liberation Sans, sans-serif" font-size="11.7" fill="#080808" stroke="#080808" stroke-width="0.45">00:00:01</text><text x="0" y="0" text-anchor="end" font-family="Liberation Sans, sans-serif" font-size="11.7" fill="#fdfdfd" stroke="#fdfdfd" stroke-width="0.32">00:00:01</text></g><rect x="0.5" y="0.5" width="234" height="244" fill="none" stroke="#c4c4c4" stroke-width="1"/></svg></div>
<div class="t" style="left:966px;top:327px"><svg width="235" height="245" viewBox="0 0 235 245"><rect x="0" y="0" width="235" height="245" fill="#101010"/><rect x="51.4" y="0" width="138.6" height="245" fill="url(#bg)"/><g clip-path="url(#clipC)"><use href="#poseC"/></g><g transform="translate(226.7,18.1) scale(1.385,1)"><text x="0.72" y="1" text-anchor="end" font-family="Liberation Sans, sans-serif" font-size="11.7" fill="#080808" stroke="#080808" stroke-width="0.45">00:00:01</text><text x="0" y="0" text-anchor="end" font-family="Liberation Sans, sans-serif" font-size="11.7" fill="#fdfdfd" stroke="#fdfdfd" stroke-width="0.32">00:00:01</text></g><rect x="0.5" y="0.5" width="234" height="244" fill="none" stroke="#c4c4c4" stroke-width="1"/></svg></div>
<div class="t" style="left:6px;top:577px"><svg width="235" height="245" viewBox="0 0 235 245"><rect x="0" y="0" width="235" height="245" fill="#101010"/><rect x="51.4" y="0" width="138.6" height="245" fill="url(#bg)"/><g clip-path="url(#clipC)"><use href="#poseC"/></g><g transform="translate(226.7,18.1) scale(1.385,1)"><text x="0.72" y="1" text-anchor="end" font-family="Liberation Sans, sans-serif" font-size="11.7" fill="#080808" stroke="#080808" stroke-width="0.45">00:00:02</text><text x="0" y="0" text-anchor="end" font-family="Liberation Sans, sans-serif" font-size="11.7" fill="#fdfdfd" stroke="#fdfdfd" stroke-width="0.32">00:00:02</text></g><rect x="0.5" y="0.5" width="234" height="244" fill="none" stroke="#c4c4c4" stroke-width="1"/></svg></div>
<div class="t" style="left:246px;top:577px"><svg width="235" height="245" viewBox="0 0 235 245"><rect x="0" y="0" width="235" height="245" fill="#101010"/><rect x="51.4" y="0" width="138.6" height="245" fill="url(#bg)"/><g clip-path="url(#clipC)"><use href="#poseC"/></g><g transform="translate(226.7,18.1) scale(1.385,1)"><text x="0.72" y="1" text-anchor="end" font-family="Liberation Sans, sans-serif" font-size="11.7" fill="#080808" stroke="#080808" stroke-width="0.45">00:00:02</text><text x="0" y="0" text-anchor="end" font-family="Liberation Sans, sans-serif" font-size="11.7" fill="#fdfdfd" stroke="#fdfdfd" stroke-width="0.32">00:00:02</text></g><rect x="0.5" y="0.5" width="234" height="244" fill="none" stroke="#c4c4c4" stroke-width="1"/></svg></div>
<div class="t" style="left:486px;top:577px"><svg width="235" height="245" viewBox="0 0 235 245"><rect x="0" y="0" width="235" height="245" fill="#101010"/><rect x="51.4" y="0" width="138.6" height="245" fill="url(#bg)"/><g clip-path="url(#clipC)"><use href="#poseC"/></g><g transform="translate(226.7,18.1) scale(1.385,1)"><text x="0.72" y="1" text-anchor="end" font-family="Liberation Sans, sans-serif" font-size="11.7" fill="#080808" stroke="#080808" stroke-width="0.45">00:00:02</text><text x="0" y="0" text-anchor="end" font-family="Liberation Sans, sans-serif" font-size="11.7" fill="#fdfdfd" stroke="#fdfdfd" stroke-width="0.32">00:00:02</text></g><rect x="0.5" y="0.5" width="234" height="244" fill="none" stroke="#c4c4c4" stroke-width="1"/></svg></div>
<div class="t" style="left:726px;top:577px"><svg width="235" height="245" viewBox="0 0 235 245"><rect x="0" y="0" width="235" height="245" fill="#101010"/><rect x="96.4" y="0" width="137.6" height="245" fill="url(#bg)"/><g clip-path="url(#clipD)"><use href="#poseD"/></g><g transform="translate(226.7,18.1) scale(1.385,1)"><text x="0.72" y="1" text-anchor="end" font-family="Liberation Sans, sans-serif" font-size="11.7" fill="#080808" stroke="#080808" stroke-width="0.45">00:00:02</text><text x="0" y="0" text-anchor="end" font-family="Liberation Sans, sans-serif" font-size="11.7" fill="#fdfdfd" stroke="#fdfdfd" stroke-width="0.32">00:00:02</text></g><rect x="0.5" y="0.5" width="234" height="244" fill="none" stroke="#c4c4c4" stroke-width="1"/></svg></div>
<div class="t" style="left:966px;top:577px"><svg width="235" height="245" viewBox="0 0 235 245"><rect x="0" y="0" width="235" height="245" fill="#101010"/><rect x="96.4" y="0" width="137.6" height="245" fill="url(#bg)"/><g clip-path="url(#clipD)"><use href="#poseD"/></g><g transform="translate(226.7,18.1) scale(1.385,1)"><text x="0.72" y="1" text-anchor="end" font-family="Liberation Sans, sans-serif" font-size="11.7" fill="#080808" stroke="#080808" stroke-width="0.45">00:00:02</text><text x="0" y="0" text-anchor="end" font-family="Liberation Sans, sans-serif" font-size="11.7" fill="#fdfdfd" stroke="#fdfdfd" stroke-width="0.32">00:00:02</text></g><rect x="0.5" y="0.5" width="234" height="244" fill="none" stroke="#c4c4c4" stroke-width="1"/></svg></div>
<div class="t" style="left:6px;top:827px"><svg width="235" height="245" viewBox="0 0 235 245"><rect x="0" y="0" width="235" height="245" fill="#101010"/><rect x="96.4" y="0" width="137.6" height="245" fill="url(#bg)"/><g clip-path="url(#clipD)"><use href="#poseD"/></g><g transform="translate(226.7,18.1) scale(1.385,1)"><text x="0.72" y="1" text-anchor="end" font-family="Liberation Sans, sans-serif" font-size="11.7" fill="#080808" stroke="#080808" stroke-width="0.45">00:00:03</text><text x="0" y="0" text-anchor="end" font-family="Liberation Sans, sans-serif" font-size="11.7" fill="#fdfdfd" stroke="#fdfdfd" stroke-width="0.32">00:00:03</text></g><rect x="0.5" y="0.5" width="234" height="244" fill="none" stroke="#c4c4c4" stroke-width="1"/></svg></div>
<div class="t" style="left:246px;top:827px"><svg width="235" height="245" viewBox="0 0 235 245"><rect x="0" y="0" width="235" height="245" fill="#101010"/><rect x="96.4" y="0" width="137.6" height="245" fill="url(#bg)"/><g clip-path="url(#clipD)"><use href="#poseD"/></g><g transform="translate(226.7,18.1) scale(1.385,1)"><text x="0.72" y="1" text-anchor="end" font-family="Liberation Sans, sans-serif" font-size="11.7" fill="#080808" stroke="#080808" stroke-width="0.45">00:00:03</text><text x="0" y="0" text-anchor="end" font-family="Liberation Sans, sans-serif" font-size="11.7" fill="#fdfdfd" stroke="#fdfdfd" stroke-width="0.32">00:00:03</text></g><rect x="0.5" y="0.5" width="234" height="244" fill="none" stroke="#c4c4c4" stroke-width="1"/></svg></div>
<div class="t" style="left:486px;top:827px"><svg width="235" height="245" viewBox="0 0 235 245"><rect x="0" y="0" width="235" height="245" fill="#101010"/><rect x="96.4" y="0" width="137.6" height="245" fill="url(#bg)"/><g clip-path="url(#clipD)"><use href="#poseD"/></g><g transform="translate(226.7,18.1) scale(1.385,1)"><text x="0.72" y="1" text-anchor="end" font-family="Liberation Sans, sans-serif" font-size="11.7" fill="#080808" stroke="#080808" stroke-width="0.45">00:00:03</text><text x="0" y="0" text-anchor="end" font-family="Liberation Sans, sans-serif" font-size="11.7" fill="#fdfdfd" stroke="#fdfdfd" stroke-width="0.32">00:00:03</text></g><rect x="0.5" y="0.5" width="234" height="244" fill="none" stroke="#c4c4c4" stroke-width="1"/></svg></div>
<div class="t" style="left:726px;top:827px"><svg width="235" height="245" viewBox="0 0 235 245"><rect x="0" y="0" width="235" height="245" fill="#101010"/><rect x="51.4" y="0" width="138.6" height="245" fill="url(#bg)"/><g clip-path="url(#clipE)"><use href="#poseE"/></g><g transform="translate(226.7,18.1) scale(1.385,1)"><text x="0.72" y="1" text-anchor="end" font-family="Liberation Sans, sans-serif" font-size="11.7" fill="#080808" stroke="#080808" stroke-width="0.45">00:00:03</text><text x="0" y="0" text-anchor="end" font-family="Liberation Sans, sans-serif" font-size="11.7" fill="#fdfdfd" stroke="#fdfdfd" stroke-width="0.32">00:00:03</text></g><rect x="0.5" y="0.5" width="234" height="244" fill="none" stroke="#c4c4c4" stroke-width="1"/></svg></div>
<div class="t" style="left:966px;top:827px"><svg width="235" height="245" viewBox="0 0 235 245"><rect x="0" y="0" width="235" height="245" fill="#101010"/><rect x="51.4" y="0" width="138.6" height="245" fill="url(#bg)"/><g clip-path="url(#clipE)"><use href="#poseE"/></g><g transform="translate(226.7,18.1) scale(1.385,1)"><text x="0.72" y="1" text-anchor="end" font-family="Liberation Sans, sans-serif" font-size="11.7" fill="#080808" stroke="#080808" stroke-width="0.45">00:00:03</text><text x="0" y="0" text-anchor="end" font-family="Liberation Sans, sans-serif" font-size="11.7" fill="#fdfdfd" stroke="#fdfdfd" stroke-width="0.32">00:00:03</text></g><rect x="0.5" y="0.5" width="234" height="244" fill="none" stroke="#c4c4c4" stroke-width="1"/></svg></div>
</body></html>
